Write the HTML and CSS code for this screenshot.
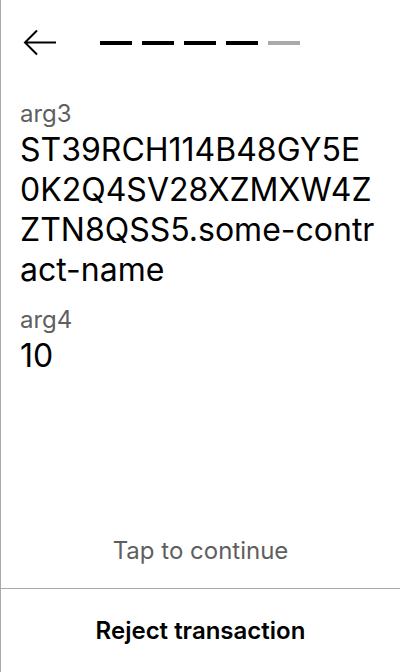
FILE: index.html
```html
<!DOCTYPE html>
<html>
<head>
<meta charset="utf-8">
<link rel="stylesheet" href="styles.css">
</head>
<body>
<div class="screen">
  <header class="header">
    <svg class="back" width="34" height="28" viewBox="0 0 34 28">
      <path d="M33 13.5H3M14 1.5L2 13.5L14 25.5" fill="none" stroke="#000" stroke-width="2"/>
    </svg>
    <div class="steps">
      <span class="step"></span>
      <span class="step"></span>
      <span class="step"></span>
      <span class="step"></span>
      <span class="step step-off"></span>
    </div>
  </header>
  <main class="content">
    <div class="field">
      <div class="label">arg3</div>
      <div class="value">ST39RCH114B48GY5E0K2Q4SV28XZMXW4ZZTN8QSS5.some-contract-name</div>
    </div>
    <div class="field">
      <div class="label">arg4</div>
      <div class="value">10</div>
    </div>
  </main>
  <div class="tap">Tap to continue</div>
  <div class="reject">Reject transaction</div>
</div>
</body>
</html>
```
FILE: styles.css
```css
html, body {
  margin: 0;
  padding: 0;
  background: #fff;
}
.screen {
  box-sizing: border-box;
  width: 400px;
  height: 672px;
  border-left: 1px solid #aaa;
  display: flex;
  flex-direction: column;
  font-family: Inter, "Noto Sans", sans-serif;
  color: #000;
}
.header {
  display: flex;
  align-items: center;
  height: 86px;
  padding-left: 22px;
  flex-shrink: 0;
}
.back {
  display: block;
}
.steps {
  display: flex;
  gap: 10px;
  margin-left: 43px;
}
.step {
  width: 32px;
  height: 4px;
  background: #000;
}
.step-off {
  background: #aaa;
}
.content {
  flex: 1;
  padding: 12px 23px 0 19px;
  display: flex;
  flex-direction: column;
  gap: 14px;
}
.label {
  font-size: 24px;
  line-height: 32px;
  color: #5f5f5f;
}
.value {
  font-size: 32px;
  line-height: 40px;
  word-break: break-all;
}
.tap {
  text-align: center;
  font-size: 24px;
  line-height: 32px;
  color: #5f5f5f;
  padding-bottom: 21px;
}
.reject {
  border-top: 1px solid #aaa;
  height: 83px;
  flex-shrink: 0;
  display: flex;
  align-items: center;
  justify-content: center;
  font-size: 24px;
  font-weight: 600;
}
```
